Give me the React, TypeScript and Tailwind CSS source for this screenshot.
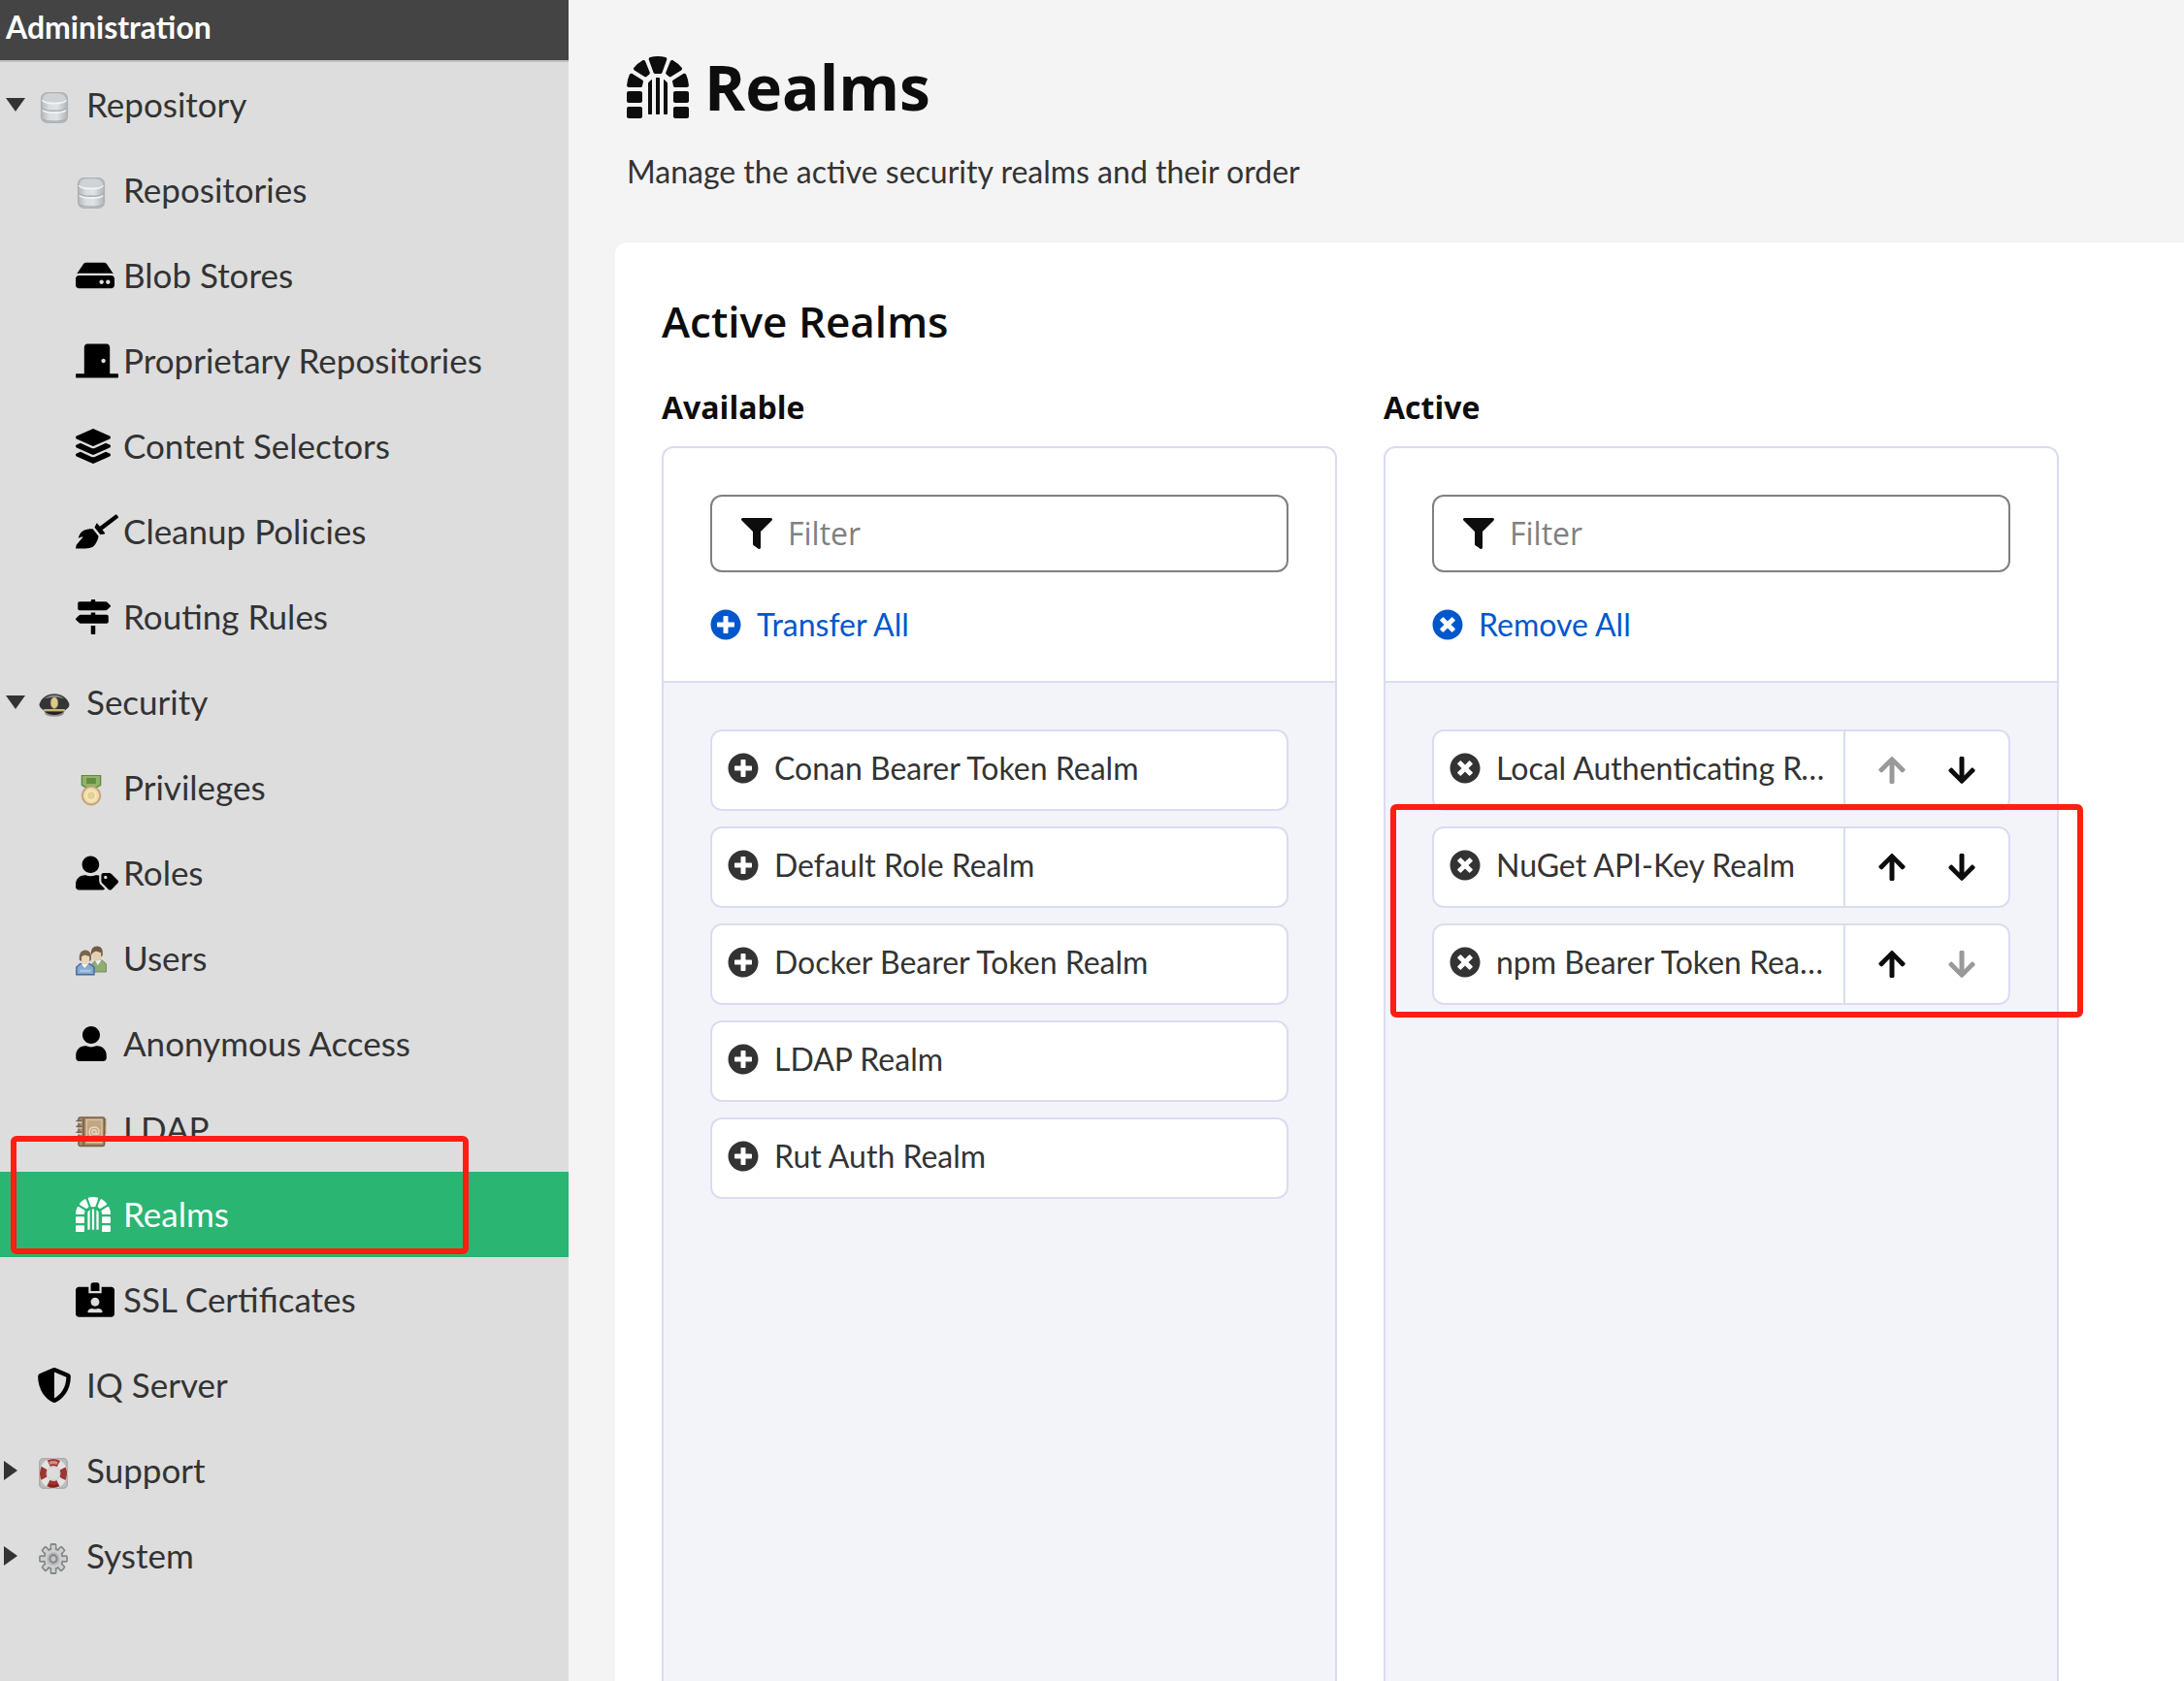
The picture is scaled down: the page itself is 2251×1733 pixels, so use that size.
import { useState } from "react";
import type { ReactNode } from "react";
import clsx from "clsx";
import {
  FaArrowDown,
  FaArrowUp,
  FaBroom,
  FaDoorClosed,
  FaDungeon,
  FaFilter,
  FaHdd,
  FaIdCardAlt,
  FaLayerGroup,
  FaMapSigns,
  FaPlusCircle,
  FaShieldAlt,
  FaTimesCircle,
  FaUser,
  FaUserTag,
} from "react-icons/fa";

function DatabaseIcon() {
  return (
    <svg viewBox="0 0 16 16" className="mt-1.5 size-8">
      <defs>
        <linearGradient id="db" x1="0" x2="1" y1="0" y2="0">
          <stop offset="0" stopColor="#b4b8bb" />
          <stop offset="0.3" stopColor="#d9dde0" />
          <stop offset="0.6" stopColor="#e0e3e6" />
          <stop offset="1" stopColor="#b2b5b8" />
        </linearGradient>
      </defs>
      <rect x="1.3" y="0.4" width="13.4" height="15.2" rx="3" fill="url(#db)" stroke="#aeb1b3" strokeWidth="0.7" />
      <ellipse cx="8" cy="3.1" rx="5.8" ry="2.3" fill="#d0d3d6" />
      <path d="M1.8 4c.8 2.4 11.6 2.4 12.4 0M2 9.2c1.4 1.8 10.6 1.8 12 0" fill="none" stroke="#f2f4f5" strokeWidth="0.8" />
      <path d="M1.7 8.2c1.4 1.9 11.2 1.9 12.6 0M2 14c2 1.4 10 1.4 12 0" fill="none" stroke="#a9adb0" strokeWidth="0.7" />
    </svg>
  );
}

function CapIcon() {
  return (
    <svg viewBox="0 0 16 16" className="mt-1.5 size-8">
      <ellipse cx="8" cy="12" rx="5" ry="1.9" fill="#8e8e8e" />
      <path d="M.3 7.4C1.4 4 4.6 2.1 8 2.1s6.6 1.9 7.7 5.3c.2 1.5-1 2.4-2.3 3.3H2.6C1.3 9.8.1 8.9.3 7.4z" fill="#343536" />
      <path d="M2.8 4.8c2.6-2.7 7.8-2.7 10.4 0-2.6-1-7.8-1-10.4 0z" fill="#85878a" />
      <path d="M2.7 11c2.7 2.6 7.9 2.6 10.6 0z" fill="#222" />
      <rect x="2.6" y="10" width="10.8" height="1.2" fill="#c9b57a" />
      <ellipse cx="8" cy="6.8" rx="1.9" ry="2.9" fill="#dccb8e" stroke="#a08d57" strokeWidth="0.4" />
    </svg>
  );
}

function MedalIcon() {
  return (
    <svg viewBox="0 0 16 16" className="mt-1.5 size-8">
      <path d="M3.2.2h9.6v5l-2.3 1.3h-5L3.2 5.2z" fill="#8fb369" stroke="#5f8a45" strokeWidth="0.7" />
      <rect x="5.6" y="1.5" width="4.8" height="3" fill="#638c41" />
      <circle cx="8" cy="10.6" r="4.6" fill="#efdfae" stroke="#c8a679" strokeWidth="1.1" />
      <circle cx="8" cy="10.6" r="2.3" fill="#e3d096" stroke="#f7ecc6" strokeWidth="0.6" />
    </svg>
  );
}

function UsersIcon() {
  return (
    <svg viewBox="0 0 16 16" className="mt-1.5 size-8">
      <path d="M8.5 13.5V9.3l1.8-1.7h3.4l2 1.7v4.2z" fill="#90ab76" stroke="#758f5d" strokeWidth="0.5" />
      <path d="M10 7.5l1.4 2.6 1.8-2.6z" fill="#f1efe8" />
      <rect x="8.7" y="1" width="4.6" height="6.6" rx="2" fill="#e5cfb2" />
      <path d="M7.9 5C7.7 1.6 8.9.2 11 .2s3.2 1.4 2.9 4.8l-.8.8V3.6l-2.6-.9-1.5.8z" fill="#735b40" />
      <path d="M.4 14.9V11l1.9-1.7h5L9.5 11v3.9z" fill="#86a9d0" stroke="#44699a" strokeWidth="0.7" />
      <path d="M2.8 9.2l1.8 2.3 2.1-2.3z" fill="#f5f7fa" />
      <path d="M2.2 12.3h5.6v1.3H2.2z" fill="#aac5e2" />
      <rect x="2.7" y="3.5" width="4.5" height="6.2" rx="2" fill="#ead6ba" />
      <path d="M1.9 7.4C1.6 3.9 2.8 2.2 5 2.2s3.3 1.7 3 5.2l-.9.6V5.5l-2.5-.8L3 5.6V8z" fill="#7d654a" />
    </svg>
  );
}

function AddressBookIcon() {
  return (
    <svg viewBox="0 0 16 16" className="mt-1.5 size-8">
      <rect x="12" y="1" width="3.7" height="4" fill="#94a568" />
      <rect x="12" y="5" width="3.7" height="4" fill="#d1a95f" />
      <rect x="1.5" y="0.5" width="13.3" height="14.7" rx="0.8" fill="#a98a68" stroke="#7c6045" strokeWidth="0.8" />
      <rect x="3.6" y="1" width="0.9" height="14" fill="#80644a" />
      <rect x="5.6" y="1.7" width="7.9" height="11.7" fill="#c2a583" stroke="#dcc7a9" strokeWidth="0.7" />
      <circle cx="9.5" cy="8" r="1.1" fill="none" stroke="#ead9bf" strokeWidth="0.7" />
      <path d="M11.6 10.4c-1.4 1-4.5.6-4.5-2.4 0-3.3 4.9-3.3 4.9-.3 0 1.8-1.4 1.8-1.4.6" fill="none" stroke="#ead9bf" strokeWidth="0.7" />
      <path d="M.2 2.3h3M.2 5.2h3M.2 8.1h3M.2 11h3" stroke="#6f6558" strokeWidth="0.8" />
      <path d="M.2 3.1h3M.2 6h3M.2 8.9h3M.2 11.8h3" stroke="#e8e6e2" strokeWidth="0.6" />
    </svg>
  );
}

function LifebuoyIcon() {
  return (
    <svg viewBox="0 0 16 16" preserveAspectRatio="none" className="mt-1.5 h-8 w-[30px]">
      <rect x="0.4" y="0.4" width="15.2" height="15.2" rx="2" fill="#bdbdbb" stroke="#acacaa" strokeWidth="0.8" />
      <circle cx="8" cy="8" r="5.6" fill="none" stroke="#e2e2e2" strokeWidth="4.2" />
      <circle
        cx="8"
        cy="8"
        r="5.7"
        fill="none"
        stroke="#9c3632"
        strokeWidth="3.6"
        strokeDasharray="5.6 3.354"
        strokeDashoffset="2.8"
      />
      <path d="M5.8 2.8c1.4-.6 3-.6 4.4 0" fill="none" stroke="#d08e8a" strokeWidth="1.6" />
      <path d="M5.6 13.9c1.5.8 3.3.8 4.8 0" fill="none" stroke="#7f201d" strokeWidth="1" />
      <circle cx="8" cy="8" r="3.6" fill="#dcdcdc" stroke="#cfc4c3" strokeWidth="0.4" />
    </svg>
  );
}

function GearIcon() {
  const teeth = [0, 45, 90, 135, 180, 225, 270, 315];
  return (
    <svg viewBox="0 0 16 16" preserveAspectRatio="none" className="mt-1.5 h-8 w-[30px]">
      {teeth.map((angle) => (
        <rect
          key={angle}
          x="6.6"
          y="0.5"
          width="2.8"
          height="4"
          rx="0.4"
          fill="#cfd0d0"
          stroke="#858889"
          strokeWidth="0.9"
          transform={`rotate(${angle} 8 8)`}
        />
      ))}
      <circle cx="8" cy="8" r="5.2" fill="#cbcdcd" stroke="#858889" strokeWidth="0.9" />
      {teeth.map((angle) => (
        <rect key={angle} x="7.1" y="1.2" width="1.8" height="3" fill="#cfd0d0" transform={`rotate(${angle} 8 8)`} />
      ))}
      <circle cx="8" cy="8" r="3" fill="none" stroke="#b3b6b6" strokeWidth="0.8" />
      <circle cx="8" cy="8" r="1.9" fill="#c4c6c6" stroke="#858889" strokeWidth="1.1" />
    </svg>
  );
}

type NavItem = {
  label: string;
  icon: ReactNode;
  level: 0 | 1;
  state?: "open" | "closed";
};

const navItems: NavItem[] = [
  { label: "Repository", icon: <DatabaseIcon />, level: 0, state: "open" },
  { label: "Repositories", icon: <DatabaseIcon />, level: 1 },
  { label: "Blob Stores", icon: <FaHdd className="h-9 w-10" />, level: 1 },
  { label: "Proprietary Repositories", icon: <FaDoorClosed className="h-9 w-11" />, level: 1 },
  { label: "Content Selectors", icon: <FaLayerGroup className="size-9" />, level: 1 },
  { label: "Cleanup Policies", icon: <FaBroom className="h-9 w-11" />, level: 1 },
  { label: "Routing Rules", icon: <FaMapSigns className="size-9" />, level: 1 },
  { label: "Security", icon: <CapIcon />, level: 0, state: "open" },
  { label: "Privileges", icon: <MedalIcon />, level: 1 },
  { label: "Roles", icon: <FaUserTag className="h-9 w-11" />, level: 1 },
  { label: "Users", icon: <UsersIcon />, level: 1 },
  { label: "Anonymous Access", icon: <FaUser className="h-9 w-8" />, level: 1 },
  { label: "LDAP", icon: <AddressBookIcon />, level: 1 },
  { label: "Realms", icon: <FaDungeon className="size-9" />, level: 1 },
  { label: "SSL Certificates", icon: <FaIdCardAlt className="h-9 w-10" />, level: 1 },
  { label: "IQ Server", icon: <FaShieldAlt className="-ml-0.5 size-9" />, level: 0 },
  { label: "Support", icon: <LifebuoyIcon />, level: 0, state: "closed" },
  { label: "System", icon: <GearIcon />, level: 0, state: "closed" },
];

const availableRealms = [
  "Conan Bearer Token Realm",
  "Default Role Realm",
  "Docker Bearer Token Realm",
  "LDAP Realm",
  "Rut Auth Realm",
];

const activeRealms = ["Local Authenticating Realm", "NuGet API-Key Realm", "npm Bearer Token Realm"];

function Caret({ state }: { state?: "open" | "closed" }) {
  if (state === "open") {
    return (
      <svg viewBox="0 0 20 14" className="ml-0.5 h-3.5 w-5 fill-[#333]">
        <path d="M0 0h20L10 14z" />
      </svg>
    );
  }
  if (state === "closed") {
    return (
      <svg viewBox="0 0 14 20" className="h-5 w-3.5 fill-[#333]">
        <path d="M0 0v20L14 10z" />
      </svg>
    );
  }
  return null;
}

function Sidebar() {
  const current = "Realms";

  return (
    <aside className="w-[586px] shrink-0 bg-[#ddd]">
      <h2 className="h-16 border-b-2 border-[#c0c0c0] bg-[#444] px-1.5 pt-1 text-[32px] leading-12 font-bold text-white">
        Administration
      </h2>
      <nav aria-label="Administration">
        <ul>
          {navItems.map((item) => (
            <li key={item.label} className="relative">
              <a
                href="#"
                aria-current={item.label === current ? "page" : undefined}
                className={clsx(
                  "flex h-22 items-center pl-1 text-[35px]",
                  item.label === current ? "bg-[#2ab573] text-white" : "text-[#333]",
                )}
              >
                {item.level === 0 && (
                  <span className="flex w-9 shrink-0">
                    <Caret state={item.state} />
                  </span>
                )}
                <span
                  className={clsx(
                    "flex w-[49px] shrink-0",
                    item.level === 1 && "ml-[74px]",
                    item.label === current ? "text-white" : "text-black",
                  )}
                >
                  {item.icon}
                </span>
                <span className="pb-0.5">{item.label}</span>
              </a>
              {item.label === current && (
                <div className="pointer-events-none absolute -top-[37px] left-[11px] z-10 h-[122px] w-[472px] rounded-md border-6 border-[#ff1e12]" />
              )}
            </li>
          ))}
        </ul>
      </nav>
    </aside>
  );
}

type TransferColumnProps = {
  title: string;
  id: string;
  actionIcon: ReactNode;
  actionLabel: string;
  children: ReactNode;
};

function TransferColumn({ title, id, actionIcon, actionLabel, children }: TransferColumnProps) {
  const [filter, setFilter] = useState("");

  return (
    <section className="flex min-w-0 flex-col">
      <h3 className="mb-4 font-['Open_Sans',sans-serif] text-[32px] leading-12 font-bold text-[#0d0d0d]">
        {title}
      </h3>
      <div className="flex flex-1 flex-col rounded-t-xl border-2 border-b-0 border-[#dadcf0]">
        <div className="border-b-2 border-[#dadcf0] px-12 pt-12 pb-[34px]">
          <label
            htmlFor={id}
            className="flex h-20 items-center gap-4 rounded-xl border-2 border-[#808080] px-[30px] text-[32px]"
          >
            <FaFilter className="shrink-0 text-[#0d0d0d]" />
            <input
              id={id}
              type="text"
              placeholder="Filter"
              value={filter}
              onChange={(e) => setFilter(e.target.value)}
              className="min-w-0 flex-1 font-['Open_Sans',sans-serif] text-[32px] text-[#333] outline-none placeholder:text-[#808080]"
            />
          </label>
          <button type="button" className="mt-[30px] flex h-12 items-center gap-4 text-[32px] text-[#0057cc]">
            {actionIcon}
            {actionLabel}
          </button>
        </div>
        <div className="flex-1 bg-[#f3f4fa] p-12">{children}</div>
      </div>
    </section>
  );
}

export default function App() {
  return (
    <div className="flex h-screen overflow-hidden bg-[#f4f4f4] font-[Lato,sans-serif] text-[#333]">
      <Sidebar />
      <main className="flex min-w-0 flex-1 flex-col pl-12">
        <header className="px-3 pt-12">
          <h1 className="flex h-21 items-center gap-4 font-['Open_Sans',sans-serif] text-[64px] font-bold text-[#0d0d0d]">
            <FaDungeon />
            Realms
          </h1>
          <p className="mt-5 mb-12 text-[32px] leading-[50px]">Manage the active security realms and their order</p>
        </header>

        <div className="flex flex-1 flex-col rounded-tl-xl bg-white pt-12 pl-12">
          <h2 className="mb-8 font-['Open_Sans',sans-serif] text-[44px] leading-[66px] font-semibold text-[#0d0d0d]">
            Active Realms
          </h2>
          <div className="grid w-full max-w-[1440px] flex-1 grid-cols-2 gap-12">
            <TransferColumn
              title="Available"
              id="filter-available"
              actionIcon={<FaPlusCircle />}
              actionLabel="Transfer All"
            >
              <ul className="flex flex-col gap-4">
                {availableRealms.map((realm) => (
                  <li key={realm}>
                    <button
                      type="button"
                      className="flex h-21 w-full items-center gap-4 rounded-xl border-2 border-[#dadcf0] bg-white px-4 pb-1 text-left text-[32px]"
                    >
                      <FaPlusCircle className="shrink-0" />
                      <span className="truncate">{realm}</span>
                    </button>
                  </li>
                ))}
              </ul>
            </TransferColumn>

            <TransferColumn
              title="Active"
              id="filter-active"
              actionIcon={<FaTimesCircle />}
              actionLabel="Remove All"
            >
              <div className="relative">
                <ul className="flex flex-col gap-4">
                  {activeRealms.map((realm, index) => (
                    <li key={realm} className="flex h-21 rounded-xl border-2 border-[#dadcf0] bg-white text-[32px]">
                      <button type="button" className="flex min-w-0 flex-1 items-center gap-4 px-4 pb-1 text-left">
                        <FaTimesCircle className="shrink-0" />
                        <span className="truncate">{realm}</span>
                      </button>
                      <div className="flex w-[170px] shrink-0 items-center justify-center gap-10 border-l-2 border-[#dadcf0] text-[#0d0d0d]">
                        <button
                          type="button"
                          aria-label={`Move ${realm} up`}
                          disabled={index === 0}
                          className="flex w-8 justify-center disabled:text-[#999]"
                        >
                          <FaArrowUp />
                        </button>
                        <button
                          type="button"
                          aria-label={`Move ${realm} down`}
                          disabled={index === activeRealms.length - 1}
                          className="flex w-8 justify-center disabled:text-[#999]"
                        >
                          <FaArrowDown />
                        </button>
                      </div>
                    </li>
                  ))}
                </ul>
                <div className="pointer-events-none absolute top-[77px] -right-[75px] -left-[43px] z-10 h-[220px] rounded-md border-6 border-[#ff1e12]" />
              </div>
            </TransferColumn>
          </div>
        </div>
      </main>
    </div>
  );
}
